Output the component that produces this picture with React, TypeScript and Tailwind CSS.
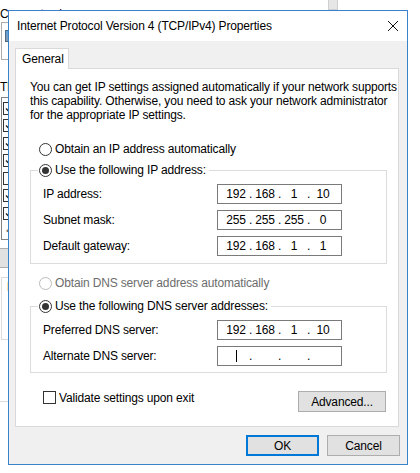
import { Fragment } from "react";

function Radio({ checked, disabled }: { checked?: boolean; disabled?: boolean }) {
  return (
    <span
      className={
        disabled
          ? "w-[13px] h-[13px] shrink-0 rounded-full border border-[#bcbcbc] bg-white flex items-center justify-center"
          : "w-[13px] h-[13px] shrink-0 rounded-full border border-[#333333] bg-white flex items-center justify-center"
      }
    >
      {checked && <span className="w-[7px] h-[7px] rounded-full bg-[#333333]" />}
    </span>
  );
}

function IpBox({ parts, caret }: { parts: string[]; caret?: boolean }) {
  return (
    <div className="w-[125px] h-[20px] border border-[#7a7a7a] bg-white flex items-center pl-[7px] leading-none">
      {parts.map((p, i) => (
        <Fragment key={i}>
          <span className="w-[22px] flex justify-center">
            {caret && i === 0 ? <span className="w-px h-[12px] bg-black" /> : p}
          </span>
          {i < 3 && <span className="w-[7px] text-center">.</span>}
        </Fragment>
      ))}
    </div>
  );
}

function Field({ label, parts, caret }: { label: string; parts: string[]; caret?: boolean }) {
  return (
    <div className="flex items-center h-[20px]">
      <span className="w-[186px] pl-[12px]">{label}</span>
      <IpBox parts={parts} caret={caret} />
    </div>
  );
}

function Group({
  legend,
  children,
  bottom,
}: {
  legend: string;
  children: React.ReactNode;
  bottom: string;
}) {
  return (
    <div className={`ml-[14px] w-[357px] border border-[#dcdcdc] flex flex-col ${bottom}`}>
      <div className="-mt-[8px] ml-[7px] self-start bg-white pl-[1px] pr-[3px] h-[14px] flex items-center gap-[3px]">
        <Radio checked />
        <span>{legend}</span>
      </div>
      <div className="mt-[7px] flex flex-col gap-[6px]">{children}</div>
    </div>
  );
}

function SmallCheck({ on }: { on: boolean }) {
  return (
    <span className="w-[13px] h-[13px] shrink-0 border border-[#333333] bg-white flex items-center justify-center">
      {on && (
        <svg width="9" height="9" viewBox="0 0 9 9">
          <path d="M1 4.5 L3.5 7 L8 1.5" stroke="#222" strokeWidth="1.4" fill="none" />
        </svg>
      )}
    </span>
  );
}

export default function App() {
  const items = [true, true, true, true, false, true, true];
  return (
    <div className="relative w-[420px] h-[473px] overflow-hidden bg-white text-[12px] tracking-[-0.15px] text-black font-['Liberation_Sans',Arial,sans-serif]">
      {/* network adapter properties window, behind */}
      <div className="absolute left-[-6px] top-0 w-[344px] flex flex-col">
        <div className="flex justify-between h-[20px]">
          <span className="pl-[6px] pt-[7px] leading-[14px]">Connect using:</span>
          <span className="w-[10px] h-[10px] bg-[#e6e6e6] border-x border-b border-[#cfcfcf]" />
        </div>
        {/* the rest of this window sits under the dialog; only its left strip shows */}
        <div className="w-[14px] overflow-hidden flex flex-col">
          <div className="w-[60px] ml-[7px] mt-[2px] h-[38px] border border-[#adadad] pl-[3px] pt-[7px]">
            <div className="w-[16px] h-[12px] bg-gradient-to-b from-[#5aa0e0] to-[#8a9aa8] border border-[#4a6a88]" />
          </div>
          <div className="mt-[20px] pl-[6px] leading-[14px] whitespace-nowrap">Th</div>
          <div className="w-[60px] mt-[3px] ml-[7px] h-[143px] border border-[#828282] flex flex-col pt-[1.5px]">
            {items.map((on, i) => (
              <div key={i} className="h-[17.5px] flex items-center pl-[1px]">
                <SmallCheck on={on} />
              </div>
            ))}
            <div className="mt-auto h-[17px] flex items-center pl-[4px] text-[#606060]">&lt;</div>
          </div>
          <div className="mt-[8px] h-[20px] w-[80px] bg-[#e1e1e1] border border-[#adadad]" />
          <div className="w-[60px] mt-[9px] ml-[7px] h-[63px] border border-[#dcdcdc]">
            <div className="-mt-[8px] ml-[4px] inline-block bg-white px-[1px] leading-[14px]">D</div>
          </div>
          <div className="mt-[61px] h-px bg-[#dcdcdc]" />
        </div>
      </div>

      {/* IPv4 properties dialog */}
      <div className="absolute left-[8px] top-[10px] w-[400px] h-[455px] border border-[#3a82c9] bg-[#f0f0f0] flex flex-col">
        <div className="h-[30px] bg-white flex items-center justify-between pl-[8px] pr-[9px]">
          <span>Internet Protocol Version 4 (TCP/IPv4) Properties</span>
          <svg width="10" height="10" viewBox="0 0 10 10">
            <path d="M0 0 L10 10 M10 0 L0 10" stroke="#111" strokeWidth="1" />
          </svg>
        </div>

        <div className="pt-[7px] pl-[6px] flex flex-col">
          <div className="relative z-10 -mb-px w-[54px] h-[21px] bg-white border-x border-t border-[#d9d9d9] flex items-center pl-[6px]">
            General
          </div>
          <div className="w-[384px] h-[359px] bg-white border border-[#d9d9d9] flex flex-col">
            <div className="mt-[11px] pl-[14px] leading-[14px] flex flex-col whitespace-nowrap">
              <span>You can get IP settings assigned automatically if your network supports</span>
              <span>this capability. Otherwise, you need to ask your network administrator</span>
              <span>for the appropriate IP settings.</span>
            </div>

            <div className="mt-[20px] ml-[23px] h-[14px] flex items-center gap-[3px]">
              <Radio />
              <span>Obtain an IP address automatically</span>
            </div>

            <div className="mt-[14px]">
              <Group legend="Use the following IP address:" bottom="pb-[7px]">
                <Field label="IP address:" parts={["192", "168", "1", "10"]} />
                <Field label="Subnet mask:" parts={["255", "255", "255", "0"]} />
                <Field label="Default gateway:" parts={["192", "168", "1", "1"]} />
              </Group>
            </div>

            <div className="mt-[12px] ml-[23px] h-[14px] flex items-center gap-[3px] text-[#6d6d6d]">
              <Radio disabled />
              <span>Obtain DNS server address automatically</span>
            </div>

            <div className="mt-[16px]">
              <Group legend="Use the following DNS server addresses:" bottom="pb-[6px]">
                <Field label="Preferred DNS server:" parts={["192", "168", "1", "10"]} />
                <Field label="Alternate DNS server:" parts={["", "", "", ""]} caret />
              </Group>
            </div>

            <div className="mt-[18px] flex items-start justify-between pl-[27px] pr-[12px]">
              <div className="h-[13px] flex items-center gap-[3px]">
                <span className="w-[13px] h-[13px] border border-[#333333] bg-white" />
                <span>Validate settings upon exit</span>
              </div>
              <button className="w-[88px] h-[21px] bg-[#e1e1e1] border border-[#adadad] flex items-center justify-center">
                Advanced...
              </button>
            </div>
          </div>
        </div>

        <div className="mt-[8px] pr-[7px] flex justify-end gap-[8px]">
          <button className="w-[73px] h-[21px] bg-[#e1e1e1] border-2 border-[#0078d7] flex items-center justify-center">
            OK
          </button>
          <button className="w-[73px] h-[21px] bg-[#e1e1e1] border border-[#adadad] flex items-center justify-center">
            Cancel
          </button>
        </div>
      </div>
    </div>
  );
}
